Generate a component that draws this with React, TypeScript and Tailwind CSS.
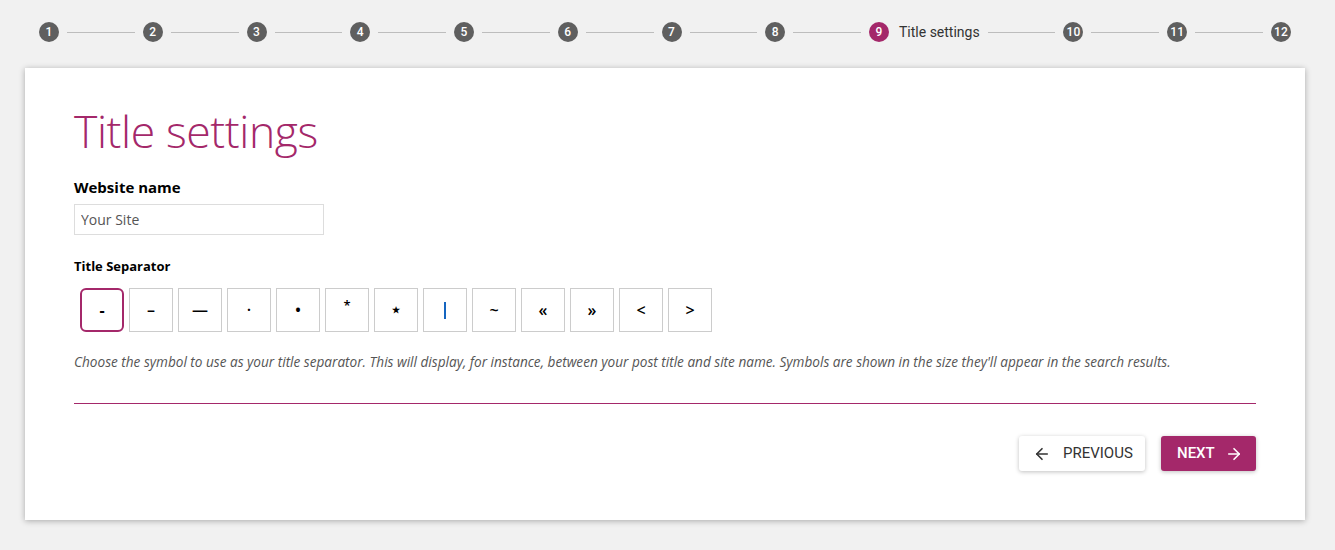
import { Fragment } from 'react';
import { ArrowLeft, ArrowRight } from 'lucide-react';

const steps = Array.from({ length: 12 }, (_, i) => i + 1);
const current = 9;

const separators = ['-', '–', '—', '·', '•', '*', '★', '|', '~', '«', '»', '<', '>'];

function Stepper() {
  return (
    <div className="flex items-center pl-[39px] pr-[44px] h-[64px] font-['Roboto',sans-serif]">
      {steps.map((n, i) => (
        <Fragment key={n}>
          <span
            className={
              'flex items-center justify-center w-5 h-5 rounded-full text-[12px] font-medium text-white shrink-0 ' +
              (n === current ? 'bg-[#a4286a]' : 'bg-[#5f5f5f]')
            }
          >
            {n}
          </span>
          {n === current && (
            <span className="ml-[10px] text-[14px] text-[#333] whitespace-nowrap">Title settings</span>
          )}
          {i < steps.length - 1 && <span className="flex-1 h-px bg-[#bdbdbd] mx-2" />}
        </Fragment>
      ))}
    </div>
  );
}

export default function App() {
  return (
    <div className="min-h-[550px] bg-[#f1f1f1]">
      <Stepper />
      <div className="mx-[25px] mt-[4px] w-[1280px] h-[452px] bg-white shadow-[0_1px_6px_rgba(0,0,0,0.3)] px-[49px] pt-[33px] font-['Open_Sans',sans-serif]">
        <h1 className="text-[44.5px] leading-[60px] font-light text-[#a4286a] tracking-[-0.4px]">Title settings</h1>
        <label className="block mt-[16px] text-[15px] font-bold text-black leading-[20px]">Website name</label>
        <input
          defaultValue="Your Site"
          className="mt-[7px] w-[250px] h-[31px] border border-[#dddddd] px-[6px] text-[14px] text-[#555] outline-none"
        />
        <div className="mt-[22px] text-[13px] font-bold text-black leading-[18px]">Title Separator</div>
        <div className="flex gap-[5px] mt-[13px] ml-[6px]">
          {separators.map((s, i) => (
            <div
              key={i}
              className={
                'w-[44px] h-[44px] flex items-center justify-center text-[16px] text-black ' +
                (i === 0 ? 'border-2 border-[#a4286a] rounded-[6px] font-bold' : 'border border-[#cccccc] font-semibold')
              }
            >
              {s === '|' ? (
                <span className="block w-[2px] h-[17px] bg-[#1565c0]" />
              ) : (
                <span
                  className={s === '★' ? 'text-[9px]' : s === '*' ? 'text-[13px] -mt-[8px]' : ''}
                >
                  {s}
                </span>
              )}
            </div>
          ))}
        </div>
        <p className="mt-[21px] text-[13.6px] italic text-[#555] leading-[18px] whitespace-nowrap">
          Choose the symbol to use as your title separator. This will display, for instance, between your post title and site name. Symbols are shown in the size they'll appear in the search results.
        </p>
        <div className="mt-[32px] h-px bg-[#a4286a]" />
        <div className="flex justify-end gap-4 mt-[32px] font-['Roboto',sans-serif]">
          <button className="flex items-center h-[35px] w-[126px] pl-[14px] bg-white rounded-[3px] shadow-[0_1px_4px_rgba(0,0,0,0.25)] text-[15px] text-[#333] uppercase">
            <ArrowLeft className="w-[18px] h-[18px] mr-[12px] shrink-0" strokeWidth={2.2} />
            Previous
          </button>
          <button className="flex items-center h-[35px] w-[95px] pl-[16px] bg-[#a4286a] rounded-[3px] shadow-[0_1px_4px_rgba(0,0,0,0.25)] text-[15px] font-medium text-white uppercase">
            Next
            <ArrowRight className="w-[18px] h-[18px] ml-[10px] shrink-0" strokeWidth={2.2} />
          </button>
        </div>
      </div>
    </div>
  );
}
